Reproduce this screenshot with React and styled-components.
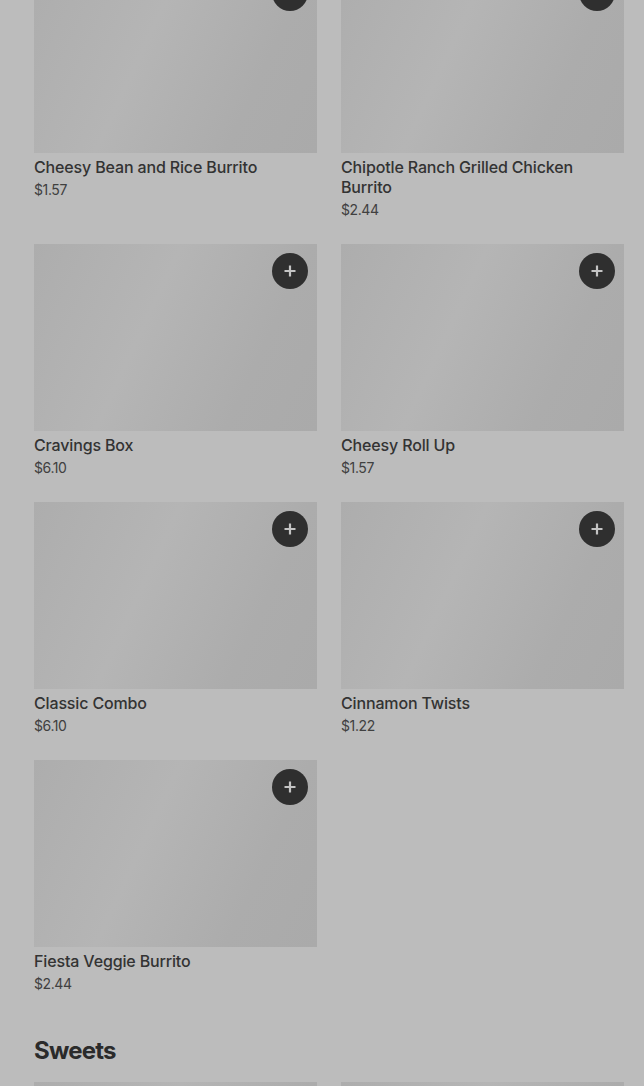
import React from 'react';
import styled, { createGlobalStyle } from 'styled-components';

const GlobalStyle = createGlobalStyle`
  html, body {
    margin: 0;
    padding: 0;
    background: #bcbcbc;
    font-family: Inter, "Noto Sans", sans-serif;
    overflow: hidden;
  }
`

const Page = styled.div`
  padding: 0 20px 0 34px;
  margin-top: -34px;
`

const Grid = styled.div`
  display: grid;
  grid-template-columns: 283px 283px;
  column-gap: 24px;
  row-gap: 24px;
  align-items: start;
`

const Card = styled.div`
  display: flex;
  flex-direction: column;
`

const Thumb = styled.div`
  position: relative;
  height: 187px;
  background: linear-gradient(115deg, #adadad 0%, #b5b5b5 40%, #acacac 75%, #aaaaaa 100%);
`

const AddButton = styled.div`
  position: absolute;
  top: 9px;
  right: 9px;
  width: 36px;
  height: 36px;
  border-radius: 50%;
  background: #2f2f2f;
  display: flex;
  align-items: center;
  justify-content: center;
`

const Title = styled.div`
  margin-top: 4px;
  font-size: 16px;
  line-height: 20px;
  font-weight: 500;
  letter-spacing: -0.15px;
  color: #333333;
`

const Price = styled.div`
  margin-top: 3px;
  font-size: 14px;
  line-height: 20px;
  color: #404040;
  letter-spacing: -0.4px;
`

const Heading = styled.h2`
  margin: 41px 0 15px;
  font-size: 24px;
  line-height: 32px;
  font-weight: 700;
  letter-spacing: -0.8px;
  color: #2b2b2b;
`

const Plus = () => (
  <svg width="14" height="14" viewBox="0 0 14 14">
    <path d="M7 1.5v11M1.5 7h11" stroke="#c4c4c4" strokeWidth="2.2" />
  </svg>
)

const items = [
  { name: 'Cheesy Bean and Rice Burrito', price: '$1.57' },
  { name: 'Chipotle Ranch Grilled Chicken Burrito', price: '$2.44' },
  { name: 'Cravings Box', price: '$6.10' },
  { name: 'Cheesy Roll Up', price: '$1.57' },
  { name: 'Classic Combo', price: '$6.10' },
  { name: 'Cinnamon Twists', price: '$1.22' },
  { name: 'Fiesta Veggie Burrito', price: '$2.44' },
]

const Item = ({ name, price }) => (
  <Card>
    <Thumb>
      <AddButton><Plus /></AddButton>
    </Thumb>
    <Title>{name}</Title>
    <Price>{price}</Price>
  </Card>
)

export default function App() {
  return (
    <Page>
      <GlobalStyle />
      <Grid>
        {items.map((item) => <Item key={item.name} {...item} />)}
      </Grid>
      <Heading>Sweets</Heading>
      <Grid>
        <Card><Thumb /></Card>
        <Card><Thumb /></Card>
      </Grid>
    </Page>
  )
}
